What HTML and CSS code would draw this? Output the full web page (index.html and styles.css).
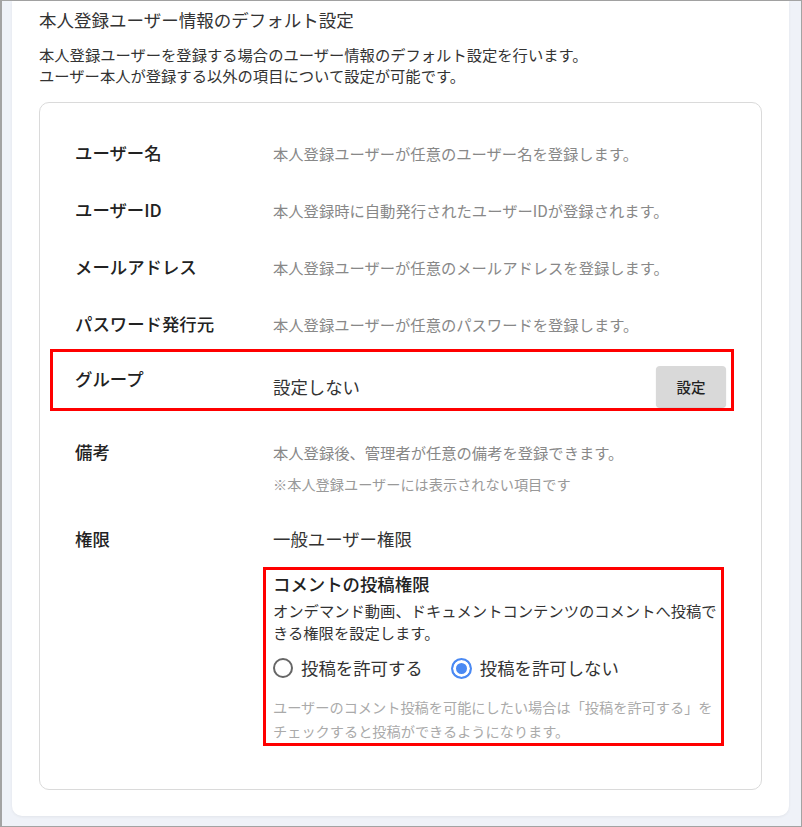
FILE: index.html
```html
<!DOCTYPE html>
<html lang="ja">
<head>
    <meta charset="UTF-8">
    <meta name="viewport" content="width=device-width, initial-scale=1.0">
    <title>本人登録ユーザー情報のデフォルト設定</title>
    <link rel="stylesheet" href="styles.css">
</head>
<body>
    <div class="frame">
        <div class="card">
            <h2 class="title">本人登録ユーザー情報のデフォルト設定</h2>
            <p class="lead">本人登録ユーザーを登録する場合のユーザー情報のデフォルト設定を行います。<br>ユーザー本人が登録する以外の項目について設定が可能です。</p>

            <div class="panel">
                <div class="row">
                    <div class="label">ユーザー名</div>
                    <div class="value">本人登録ユーザーが任意のユーザー名を登録します。</div>
                </div>
                <div class="row">
                    <div class="label">ユーザーID</div>
                    <div class="value">本人登録時に自動発行されたユーザーIDが登録されます。</div>
                </div>
                <div class="row">
                    <div class="label">メールアドレス</div>
                    <div class="value">本人登録ユーザーが任意のメールアドレスを登録します。</div>
                </div>
                <div class="row">
                    <div class="label">パスワード発行元</div>
                    <div class="value">本人登録ユーザーが任意のパスワードを登録します。</div>
                </div>

                <div class="row group">
                    <div class="label">グループ</div>
                    <div class="group-value">
                        <span class="plain">設定しない</span>
                        <button class="btn">設定</button>
                    </div>
                </div>

                <div class="row remarks">
                    <div class="label">備考</div>
                    <div>
                        <div class="value">本人登録後、管理者が任意の備考を登録できます。</div>
                        <div class="hint">※本人登録ユーザーには表示されない項目です</div>
                    </div>
                </div>

                <div class="row perm">
                    <div class="label">権限</div>
                    <div>
                        <div class="plain">一般ユーザー権限</div>
                        <div class="comment-box">
                            <div class="comment-title">コメントの投稿権限</div>
                            <p class="comment-desc">オンデマンド動画、ドキュメントコンテンツのコメントへ投稿できる権限を設定します。</p>
                            <div class="radios">
                                <label class="radio"><input type="radio" name="comment"> 投稿を許可する</label>
                                <label class="radio"><input type="radio" name="comment" checked> 投稿を許可しない</label>
                            </div>
                            <p class="comment-note">ユーザーのコメント投稿を可能にしたい場合は「投稿を許可する」をチェックすると投稿ができるようになります。</p>
                        </div>
                    </div>
                </div>
            </div>
        </div>
    </div>
</body>
</html>
```

FILE: styles.css
```css
* {
    box-sizing: border-box;
}
body {
    margin: 0;
    font-family: "Noto Sans CJK JP", "Noto Sans", sans-serif;
    color: #333;
}
.frame {
    width: 802px;
    height: 827px;
    background: #eff2f8;
    border: 1px solid #a3a3a3;
    border-left-width: 2px;
    padding: 0 12px 9px 10px;
}
.card {
    background: #fff;
    border-radius: 0 0 10px 10px;
    padding: 7px 27px 26px;
    box-shadow: 0 1px 3px rgba(0, 0, 0, 0.06);
}
.title {
    margin: 0;
    font-size: 17.5px;
    line-height: 24px;
    font-weight: 400;
    color: #333;
}
.lead {
    margin: 12px 0 16px;
    font-size: 15.3px;
    line-height: 21px;
    color: #333;
}
.panel {
    border: 1px solid #dadada;
    border-radius: 10px;
    padding: 37px 27px 43px 10px;
}
.row {
    display: grid;
    grid-template-columns: 198px 1fr;
    padding-left: 25px;
    margin-top: 31px;
}
.row:first-child {
    margin-top: 0;
}
.label {
    font-size: 17.4px;
    line-height: 26px;
    font-weight: 500;
    color: #222;
}
.value {
    font-size: 15.3px;
    line-height: 26px;
    color: #888;
}
.plain {
    font-size: 17.4px;
    line-height: 26px;
    color: #333;
}
.group {
    margin-top: 12px;
    border: 3px solid #f00;
    padding: 14px 5px 1px 22px;
}
.group-value {
    display: flex;
    align-items: center;
    justify-content: space-between;
}
.btn {
    width: 70px;
    height: 41px;
    border: none;
    border-radius: 4px;
    background: #d9d9d9;
    box-shadow: 0 1px 1px rgba(0, 0, 0, 0.2);
    font-family: inherit;
    font-size: 14.5px;
    font-weight: 500;
    color: #222;
    cursor: pointer;
}
.remarks {
    margin-top: 28px;
}
.hint {
    margin-top: 8px;
    font-size: 14.2px;
    line-height: 22px;
    color: #999;
}
.comment-box {
    width: 461px;
    margin: 15px 0 0 -10px;
    border: 3px solid #f00;
    padding: 2px 2px 0 7px;
}
.comment-title {
    font-size: 17.4px;
    line-height: 24px;
    font-weight: 500;
    color: #222;
}
.comment-desc {
    margin: 3px 0 0;
    font-size: 15.3px;
    line-height: 22px;
    color: #333;
}
.radios {
    display: flex;
    gap: 28px;
    margin-top: 12px;
}
.radio {
    display: flex;
    align-items: center;
    gap: 8px;
    font-size: 17.4px;
    line-height: 26px;
    color: #333;
}
.radio input {
    appearance: none;
    -webkit-appearance: none;
    width: 20px;
    height: 20px;
    margin: 0;
    border: 2px solid #666;
    border-radius: 50%;
    background: #fff;
}
.radio input:checked {
    width: 21px;
    height: 21px;
    border-color: #4a89f3;
    background: #4a89f3;
    box-shadow: inset 0 0 0 3px #fff;
}
.comment-note {
    margin: 14px 0 0;
    font-size: 14.2px;
    line-height: 24px;
    color: #aaa;
}
```
